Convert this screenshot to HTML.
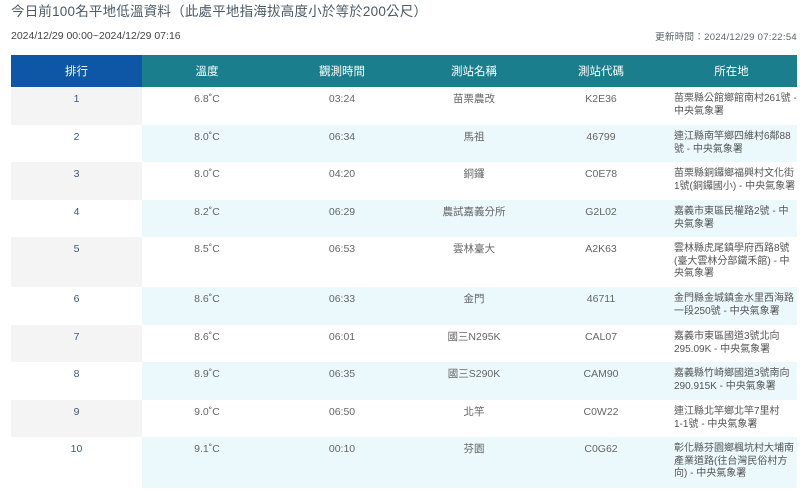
<!DOCTYPE html><html><head><meta charset="utf-8"><style>
body{margin:0;width:800px;height:490px;overflow:hidden;background:#fff;font-family:"Liberation Sans","Noto Sans CJK TC",sans-serif;color:#555;position:relative}
.t{position:absolute;left:11px;top:0px;font-size:13.5px;color:#4a5a66;letter-spacing:0.2px;white-space:nowrap}
.d{position:absolute;left:11px;top:30px;font-size:10.5px;color:#444}
.u{position:absolute;right:3px;top:29px;font-size:9.5px;color:#566;letter-spacing:0.3px}
table{position:absolute;left:11px;top:55px;border-collapse:collapse;table-layout:fixed;width:786px;font-size:10.5px}
th{height:32px;color:#fff;font-weight:normal;font-size:11.5px;background:#1b7e8c;padding:0}
th:first-child{background:#0e57a6}
td{vertical-align:top;text-align:center;padding:6px 0 0 0;line-height:12.5px;box-sizing:border-box;color:#666}
td.l{text-align:left;padding-left:8px;padding-right:0;font-size:10px;white-space:nowrap;color:#555}
tr.o td{background:#fff}tr.o td:first-child{background:#f4f4f4}
tr.e td{background:#ebf8fc}tr.e td:first-child{background:#fff}
td:first-child{color:#3a5a7a}
</style></head><body>
<div class="t">今日前100名平地低溫資料（此處平地指海拔高度小於等於200公尺）</div>
<div class="d">2024/12/29 00:00~2024/12/29 07:16</div>
<div class="u">更新時間：2024/12/29 07:22:54</div>
<table>
<colgroup><col style="width:131px"><col style="width:130px"><col style="width:140px"><col style="width:124px"><col style="width:130px"><col style="width:131px"></colgroup>
<tr><th>排行</th><th>溫度</th><th>觀測時間</th><th>測站名稱</th><th>測站代碼</th><th>所在地</th></tr>
<tr class="o" style="height:38px"><td>1</td><td>6.8˚C</td><td>03:24</td><td>苗栗農改</td><td>K2E36</td><td class="l">苗栗縣公館鄉館南村261號 -<br>中央氣象署</td></tr>
<tr class="e" style="height:37px"><td>2</td><td>8.0˚C</td><td>06:34</td><td>馬祖</td><td>46799</td><td class="l">連江縣南竿鄉四維村6鄰88<br>號 - 中央氣象署</td></tr>
<tr class="o" style="height:38px"><td>3</td><td>8.0˚C</td><td>04:20</td><td>銅鑼</td><td>C0E78</td><td class="l">苗栗縣銅鑼鄉福興村文化街<br>1號(銅鑼國小) - 中央氣象署</td></tr>
<tr class="e" style="height:37px"><td>4</td><td>8.2˚C</td><td>06:29</td><td>農試嘉義分所</td><td>G2L02</td><td class="l">嘉義市東區民權路2號 - 中<br>央氣象署</td></tr>
<tr class="o" style="height:50px"><td>5</td><td>8.5˚C</td><td>06:53</td><td>雲林臺大</td><td>A2K63</td><td class="l">雲林縣虎尾鎮學府西路8號<br>(臺大雲林分部鐵禾館) - 中<br>央氣象署</td></tr>
<tr class="e" style="height:38px"><td>6</td><td>8.6˚C</td><td>06:33</td><td>金門</td><td>46711</td><td class="l">金門縣金城鎮金水里西海路<br>一段250號 - 中央氣象署</td></tr>
<tr class="o" style="height:37px"><td>7</td><td>8.6˚C</td><td>06:01</td><td>國三N295K</td><td>CAL07</td><td class="l">嘉義市東區國道3號北向<br>295.09K - 中央氣象署</td></tr>
<tr class="e" style="height:38px"><td>8</td><td>8.9˚C</td><td>06:35</td><td>國三S290K</td><td>CAM90</td><td class="l">嘉義縣竹崎鄉國道3號南向<br>290.915K - 中央氣象署</td></tr>
<tr class="o" style="height:37px"><td>9</td><td>9.0˚C</td><td>06:50</td><td>北竿</td><td>C0W22</td><td class="l">連江縣北竿鄉北竿7里村<br>1-1號 - 中央氣象署</td></tr>
<tr class="e" style="height:51px"><td>10</td><td>9.1˚C</td><td>00:10</td><td>芬園</td><td>C0G62</td><td class="l">彰化縣芬園鄉楓坑村大埔南<br>產業道路(往台灣民俗村方<br>向) - 中央氣象署</td></tr>
</table>
</body></html>
